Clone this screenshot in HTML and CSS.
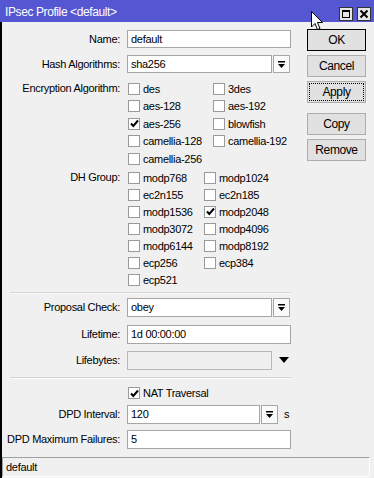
FILE: index.html
```html
<!DOCTYPE html>
<html lang="en">

<head>
    <meta charset="UTF-8">
    <title>IPsec Profile</title>
    <link rel="stylesheet" href="styles.css">
</head>

<body>
    <div class="window">
        <div class="titlebar">
            <span class="title">IPsec Profile &lt;default&gt;</span>
            <div class="win-btns">
                <span class="wbtn">
                    <svg width="12" height="12" viewBox="0 0 12 12"><rect x="2.5" y="2.5" width="7" height="7" fill="none" stroke="#000" stroke-width="1"/><rect x="2" y="2" width="8" height="2" fill="#000"/></svg>
                </span>
                <span class="wbtn">
                    <svg width="12" height="12" viewBox="0 0 12 12"><path d="M2.5 2.5 L9.5 9.5 M9.5 2.5 L2.5 9.5" stroke="#000" stroke-width="2"/></svg>
                </span>
            </div>
        </div>

        <div class="frame">
            <div class="main">
                <div class="form">
                    <div class="field">
                        <label class="lbl">Name:</label>
                        <div class="input wide">default</div>
                    </div>
                    <div class="field">
                        <label class="lbl">Hash Algorithms:</label>
                        <div class="input">sha256</div>
                        <span class="dd"><svg width="7" height="7" viewBox="0 0 7 7"><rect x="0" y="0" width="7" height="1.5" fill="#000"/><path d="M0 3 L7 3 L3.5 7 Z" fill="#000"/></svg></span>
                    </div>

                    <div class="checks enc">
                        <label class="lbl">Encryption Algorithm:</label>
                        <div class="grid enc-grid">
                            <div class="chk"><span class="box"></span>des</div>
                            <div class="chk"><span class="box"></span>3des</div>
                            <div class="chk"><span class="box"></span>aes-128</div>
                            <div class="chk"><span class="box"></span>aes-192</div>
                            <div class="chk"><span class="box on"><svg width="9" height="9" viewBox="0 0 9 9"><path d="M1 4.5 L3.3 7 L8 1.5" fill="none" stroke="#000" stroke-width="2"/></svg></span>aes-256</div>
                            <div class="chk"><span class="box"></span>blowfish</div>
                            <div class="chk"><span class="box"></span>camellia-128</div>
                            <div class="chk"><span class="box"></span>camellia-192</div>
                            <div class="chk"><span class="box"></span>camellia-256</div>
                        </div>
                    </div>

                    <div class="checks dh">
                        <label class="lbl">DH Group:</label>
                        <div class="grid dh-grid">
                            <div class="chk"><span class="box"></span>modp768</div>
                            <div class="chk"><span class="box"></span>modp1024</div>
                            <div class="chk"><span class="box"></span>ec2n155</div>
                            <div class="chk"><span class="box"></span>ec2n185</div>
                            <div class="chk"><span class="box"></span>modp1536</div>
                            <div class="chk"><span class="box on"><svg width="9" height="9" viewBox="0 0 9 9"><path d="M1 4.5 L3.3 7 L8 1.5" fill="none" stroke="#000" stroke-width="2"/></svg></span>modp2048</div>
                            <div class="chk"><span class="box"></span>modp3072</div>
                            <div class="chk"><span class="box"></span>modp4096</div>
                            <div class="chk"><span class="box"></span>modp6144</div>
                            <div class="chk"><span class="box"></span>modp8192</div>
                            <div class="chk"><span class="box"></span>ecp256</div>
                            <div class="chk"><span class="box"></span>ecp384</div>
                            <div class="chk"><span class="box"></span>ecp521</div>
                        </div>
                    </div>

                    <div class="sep sep-1"></div>

                    <div class="field tall proposal">
                        <label class="lbl">Proposal Check:</label>
                        <div class="input">obey</div>
                        <span class="dd"><svg width="7" height="7" viewBox="0 0 7 7"><rect x="0" y="0" width="7" height="1.5" fill="#000"/><path d="M0 3 L7 3 L3.5 7 Z" fill="#000"/></svg></span>
                    </div>
                    <div class="field tall lifetime">
                        <label class="lbl">Lifetime:</label>
                        <div class="input wide">1d 00:00:00</div>
                    </div>
                    <div class="field tall">
                        <label class="lbl">Lifebytes:</label>
                        <div class="input disabled"></div>
                        <span class="tri"><svg width="10" height="6" viewBox="0 0 10 6"><path d="M0 0 L10 0 L5 6 Z" fill="#000"/></svg></span>
                    </div>

                    <div class="sep sep-2"></div>

                    <div class="nat">
                        <span class="lbl"></span>
                        <div class="chk"><span class="box on"><svg width="9" height="9" viewBox="0 0 9 9"><path d="M1 4.5 L3.3 7 L8 1.5" fill="none" stroke="#000" stroke-width="2"/></svg></span>NAT Traversal</div>
                    </div>
                    <div class="field tall dpd">
                        <label class="lbl">DPD Interval:</label>
                        <div class="input short">120</div>
                        <span class="dd"><svg width="7" height="7" viewBox="0 0 7 7"><rect x="0" y="0" width="7" height="1.5" fill="#000"/><path d="M0 3 L7 3 L3.5 7 Z" fill="#000"/></svg></span>
                        <span class="unit">s</span>
                    </div>
                    <div class="field tall dpd-max">
                        <label class="lbl">DPD Maximum Failures:</label>
                        <div class="input wide">5</div>
                    </div>
                </div>

                <div class="buttons">
                    <div class="btn default">OK</div>
                    <div class="btn">Cancel</div>
                    <div class="btn focus">Apply</div>
                    <div class="btn gap">Copy</div>
                    <div class="btn">Remove</div>
                </div>
            </div>
            <div class="status">default</div>
        </div>

        <svg class="cursor" width="13" height="20" viewBox="0 0 13 20"><path d="M0.5 0.5 L0.5 16 L4 12.5 L6.5 18.5 L9 17.5 L6.5 11.5 L11.5 11.5 Z" fill="#fff" stroke="#000" stroke-width="1"/></svg>
    </div>
</body>

</html>
```

FILE: styles.css
```css
* {
    box-sizing: border-box;
}

body {
    margin: 0;
    font-family: 'Liberation Sans', Arial, sans-serif;
    font-size: 11px;
    letter-spacing: -0.3px;
    color: #000;
    background: #f0f0f0;
}

.window {
    position: relative;
    width: 374px;
    height: 478px;
    display: flex;
    flex-direction: column;
    background: #f0f0f0;
    overflow: hidden;
}

.titlebar {
    height: 22px;
    flex: none;
    display: flex;
    align-items: flex-start;
    background: #5457d1;
    color: #fff;
    padding-left: 5px;
}

.title {
    font-size: 12px;
    letter-spacing: -0.4px;
    line-height: 14px;
    padding-top: 5px;
}

.win-btns {
    margin-left: auto;
    margin-right: 3px;
    margin-top: 7px;
    display: flex;
    gap: 4px;
}

.wbtn {
    width: 14px;
    height: 14px;
    background: #e6e6e6;
    border: 1px solid #333;
    display: flex;
    align-items: center;
    justify-content: center;
}

.frame {
    flex: 1;
    display: flex;
    flex-direction: column;
    border-left: 2px solid #000;
}

.main {
    flex: 1;
    display: flex;
}

.form {
    width: 305px;
    padding-top: 8px;
}

.lbl {
    width: 118px;
    flex: none;
    text-align: right;
    margin-right: 7px;
}

.field {
    display: flex;
    align-items: center;
    height: 18px;
    margin-bottom: 7px;
}

.field.tall {
    height: 19px;
}

.input {
    width: 145px;
    height: 100%;
    background: #fff;
    border: 1px solid #a6a6a6;
    padding-left: 3px;
    line-height: 16px;
}

.input.wide {
    width: 164px;
}

.input.short {
    width: 133px;
}

.input.disabled {
    background: #f0f0f0;
    border-color: #b8b8b8;
}

.dd {
    width: 17px;
    height: 100%;
    margin-left: 1px;
    background: #fafafa;
    border: 1px solid #a6a6a6;
    display: flex;
    align-items: center;
    justify-content: center;
}

.tri {
    margin-left: 7px;
    display: flex;
}

.unit {
    margin-left: 6px;
}

.checks {
    display: flex;
    align-items: flex-start;
}

.checks .lbl {
    line-height: 17px;
}

.enc {
    margin-top: 0.5px;
}

.dh {
    margin-top: 1.5px;
}

.grid {
    display: grid;
    margin-left: 1px;
}

.enc-grid {
    grid-template-columns: 85px 85px;
    grid-auto-rows: 17.5px;
}

.dh-grid {
    grid-template-columns: 76px 76px;
    grid-auto-rows: 17px;
}

.chk {
    display: flex;
    align-items: center;
    white-space: nowrap;
}

.box {
    width: 12px;
    height: 12px;
    flex: none;
    background: #fff;
    border: 1px solid #9a9a9a;
    margin-right: 3px;
    display: flex;
    align-items: center;
    justify-content: center;
}

.sep {
    width: 281px;
    margin-left: 8px;
    border-top: 1px solid #d4d4d4;
    border-bottom: 1px solid #fafafa;
}

.sep-1 {
    margin-top: 3.5px;
    margin-bottom: 4px;
}

.lifetime {
    margin-top: 0;
}

.proposal {
    margin-bottom: 8px;
}

.sep-2 {
    margin-top: 0;
    margin-bottom: 6px;
}

.nat {
    display: flex;
    align-items: center;
    height: 17px;
    margin-bottom: 3px;
}

.nat .chk {
    margin-left: 1px;
}

.dpd {
    margin-bottom: 6px;
}

.buttons {
    width: 59px;
    padding-top: 7px;
    display: flex;
    flex-direction: column;
    gap: 4px;
}

.btn {
    height: 22px;
    background: #e1e1e1;
    border: 1px solid #adadad;
    font-size: 12px;
    letter-spacing: -0.4px;
    display: flex;
    align-items: center;
    justify-content: center;
}

.btn.default {
    border-color: #000;
}

.btn.focus {
    outline: 1px dotted #000;
    outline-offset: -3px;
}

.btn.gap {
    margin-top: 6px;
}

.status {
    width: 368px;
    height: 20px;
    margin-bottom: 1px;
    border-top: 1px solid #a0a0a0;
    border-left: 1px solid #a0a0a0;
    border-right: 1px solid #fff;
    border-bottom: 1px solid #fff;
    padding-left: 3px;
    line-height: 18px;
}

.cursor {
    position: absolute;
    left: 311px;
    top: 11px;
}
```
